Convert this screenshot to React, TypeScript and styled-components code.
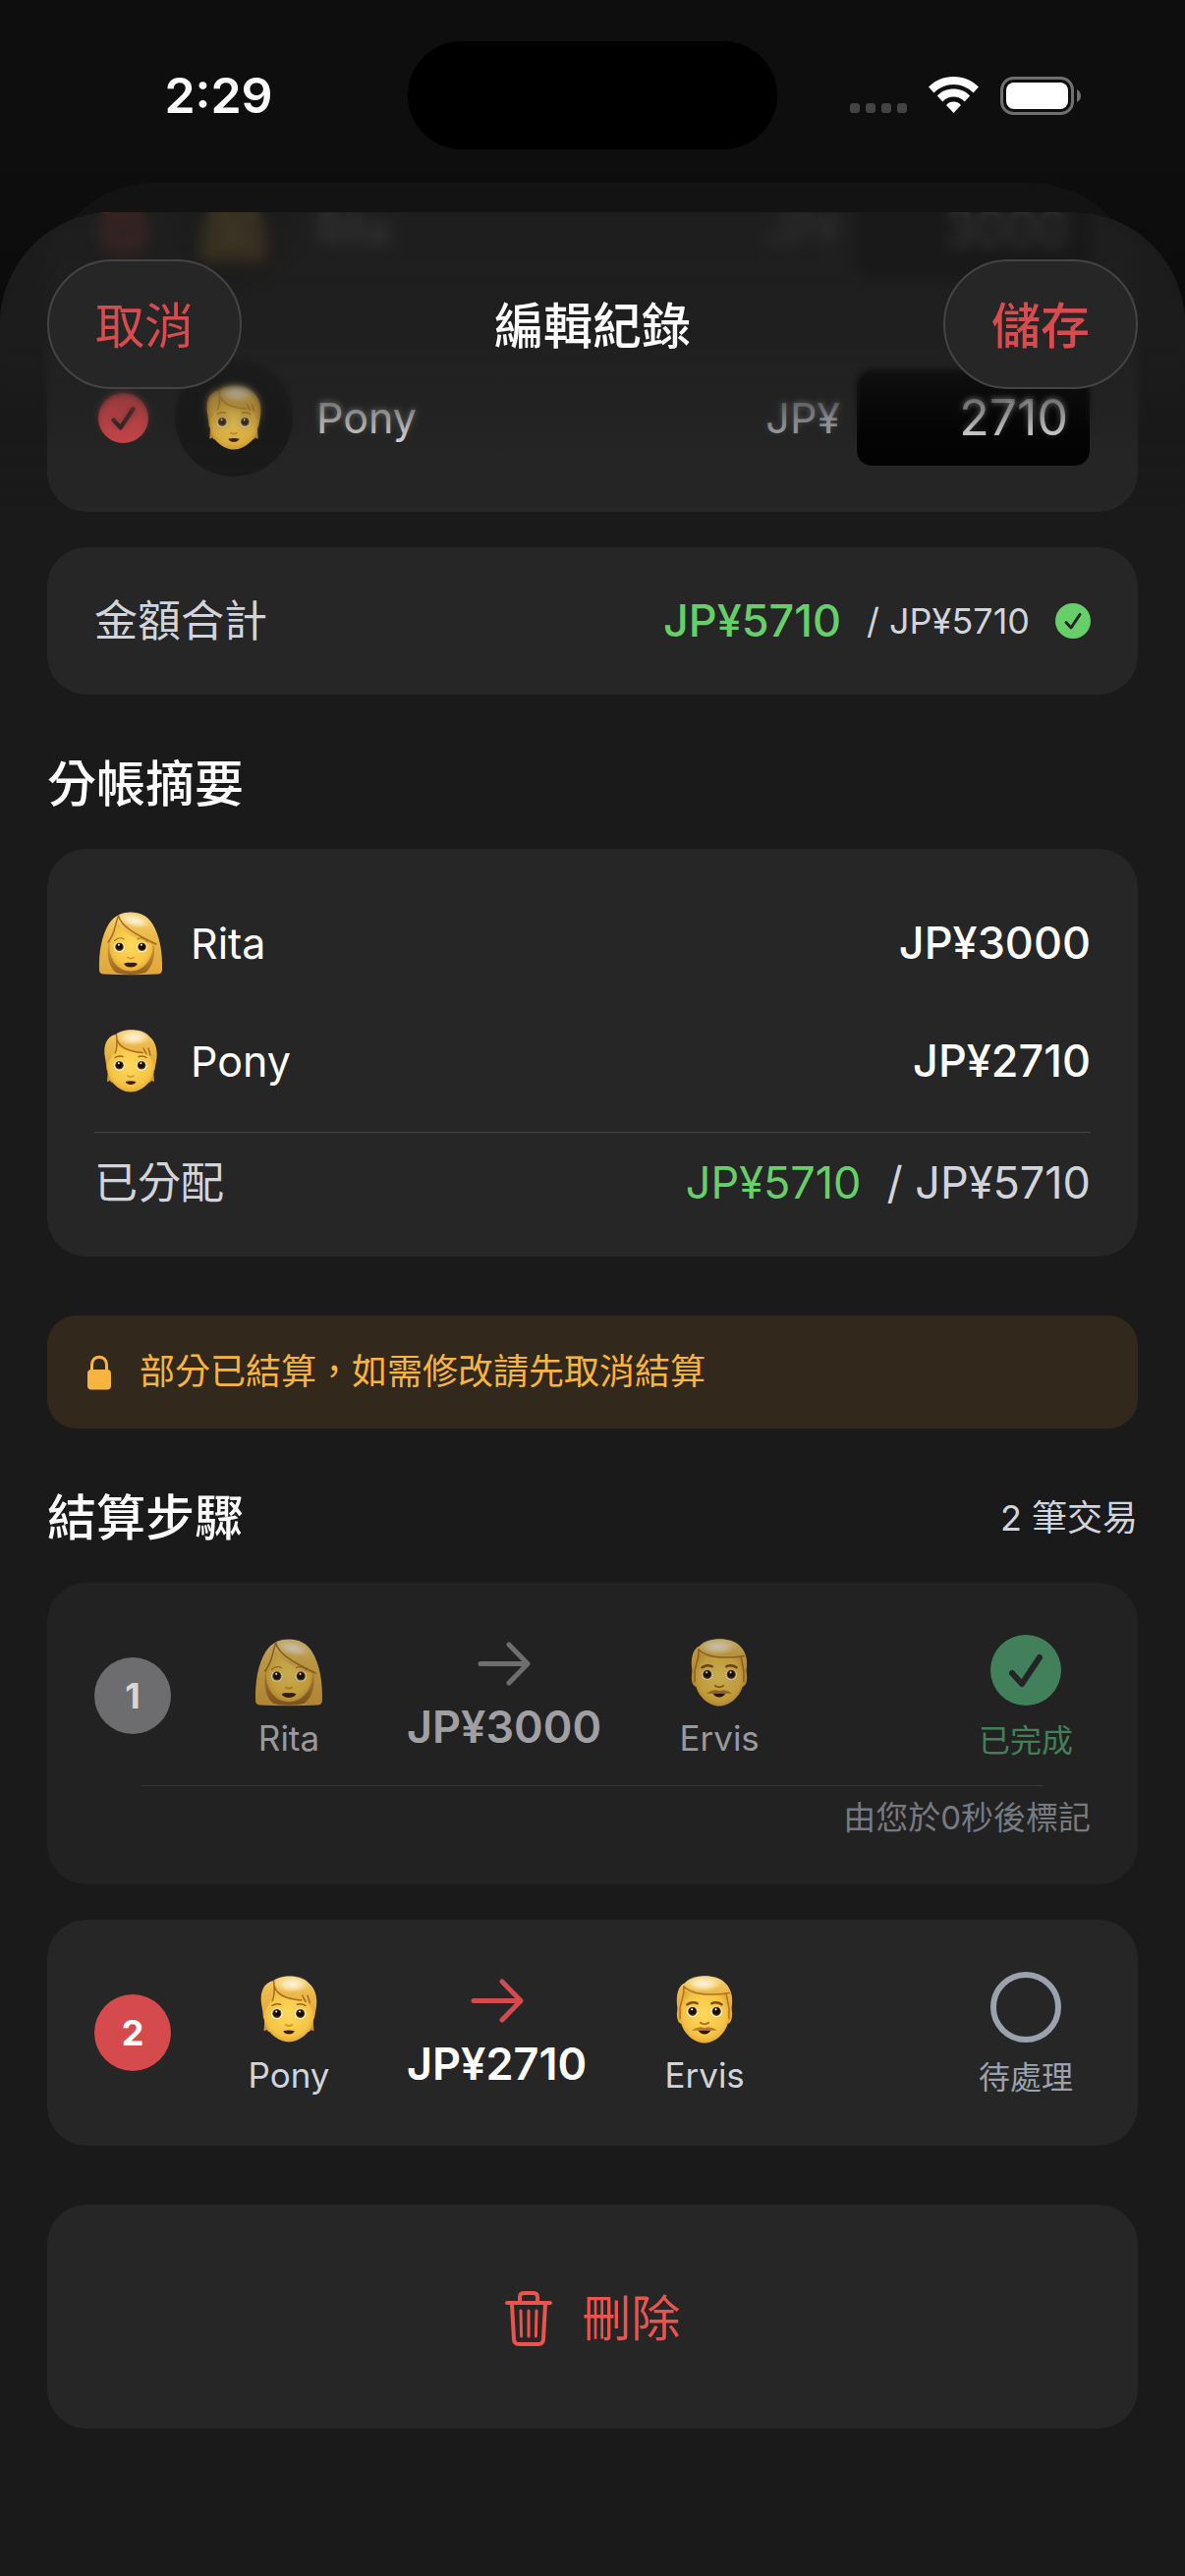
import { useState } from 'react'
import styled, { createGlobalStyle } from 'styled-components'

const GlobalStyle = createGlobalStyle`
    * {
        box-sizing: border-box;
    }
    html, body, #root {
        margin: 0;
        min-height: 100vh;
    }
    body {
        background-color: #0e0e0e;
        color: #ffffff;
        font-family: Inter, "Noto Sans CJK TC", sans-serif;
        font-size: 43px;
        line-height: 54px;
    }
    h1, h2, p, ul, ol {
        margin: 0;
        padding: 0;
        font-size: inherit;
        font-weight: inherit;
    }
    ul, ol {
        list-style: none;
    }
    button, input {
        font: inherit;
        color: inherit;
        border: none;
        background: none;
        padding: 0;
        margin: 0;
    }
    svg {
        display: block;
        flex-shrink: 0;
    }
`

const Screen = styled.div`
    min-height: 100vh;
    display: flex;
    flex-direction: column;
    background: linear-gradient(#0e0e0e, #0e0e0e 160px, #0b0b0b 320px);
`

const StatusBar = styled.div`
    display: grid;
    grid-template-columns: 1fr 376px 1fr;
    align-items: center;
    padding: 42px 0 34px;
`

const Time = styled.time`
    padding-left: 30px;
    text-align: center;
    font-size: 50px;
    font-weight: 600;
`

const Island = styled.div`
    height: 110px;
    border-radius: 55px;
    background-color: #000000;
`

const Signals = styled.div`
    display: flex;
    align-items: center;
    justify-content: center;
    gap: 22px;
    padding-right: 32px;
`

const BackSheet = styled.div`
    height: 180px;
    margin: 0 44px -150px;
    border-radius: 114px 114px 0 0;
    background-color: #131313;
`

const Sheet = styled.main`
    position: relative;
    flex: 1;
    overflow: hidden;
    border-radius: 114px 114px 0 0;
    background-color: #1a1a1a;
`

const Header = styled.header`
    position: absolute;
    top: 0;
    left: 0;
    right: 0;
    display: grid;
    grid-template-columns: 1fr auto 1fr;
    align-items: center;
    padding: 48px;
`

const Title = styled.h1`
    padding-top: 4px;
    font-size: 50px;
    font-weight: 500;
    line-height: 60px;
`

const PillButton = styled.button<{ $strong?: boolean }>`
    justify-self: ${({ $strong }) => ($strong ? 'end' : 'start')};
    height: 132px;
    padding: 4px 47px 0;
    border: 2px solid #444444;
    border-radius: 66px;
    background-color: #262626;
    color: #d84b4f;
    font-size: 50px;
    font-weight: ${({ $strong }) => ($strong ? 500 : 400)};
`

const Veil = styled.div<{ $blur: number; $from: number; $to: number }>`
    position: absolute;
    top: 0;
    left: 0;
    right: 0;
    height: ${({ $to }) => $to}px;
    pointer-events: none;
    backdrop-filter: blur(${({ $blur }) => $blur}px);
    mask-image: linear-gradient(#000 ${({ $from }) => $from}px, transparent);
`

const Tint = styled.div`
    position: absolute;
    top: 0;
    left: 0;
    right: 0;
    height: 300px;
    pointer-events: none;
    background: linear-gradient(
        rgba(29, 29, 29, 0.87),
        rgba(29, 29, 29, 0.84) 60px,
        rgba(29, 29, 29, 0.7) 130px,
        rgba(29, 29, 29, 0.34) 190px,
        rgba(29, 29, 29, 0.14) 225px,
        rgba(29, 29, 29, 0)
    );
`

const Content = styled.div`
    display: flex;
    flex-direction: column;
    gap: 60px;
    margin-top: -79px;
    padding: 0 48px 150px;
`

const Section = styled.section`
    display: flex;
    flex-direction: column;
    gap: 36px;
`

const Card = styled.div<{ $done?: boolean }>`
    padding: 48px;
    border-radius: 40px;
    background-color: ${({ $done }) => ($done ? '#222222' : '#262626')};
`

const MemberList = styled.ul`
    display: flex;
    flex-direction: column;
    gap: 72px;
    padding: 36px 48px;
    border-radius: 40px;
    background-color: #262626;
`

const MemberRow = styled.li`
    display: flex;
    align-items: center;
    gap: 24px;
`

const CheckSlot = styled.span`
    display: grid;
    place-items: center;
    width: 58px;
    > * {
        grid-area: 1 / 1;
    }
    svg {
        pointer-events: none;
    }
`

const CheckBox = styled.input`
    appearance: none;
    width: 51px;
    height: 51px;
    border: 5px solid #d84b4f;
    border-radius: 50%;
    &:checked {
        background-color: #d84b4f;
    }
`

const Avatar = styled.span`
    display: grid;
    place-items: center;
    width: 120px;
    height: 120px;
    border-radius: 50%;
    background-color: #1a1a1a;
`

const MemberName = styled.label`
    flex: 1;
    color: #e8e8e8;
`

const AmountField = styled.label`
    display: flex;
    align-items: center;
    gap: 16px;
    color: #b8bac2;
`

const AmountInput = styled.input`
    width: 239px;
    height: 100px;
    padding: 0 22px;
    border: 1px solid #2b2b2b;
    border-radius: 16px;
    background-color: #000000;
    color: #f2f2f2;
    font-size: 50px;
    text-align: right;
`

const Line = styled.div`
    display: flex;
    align-items: center;
    justify-content: space-between;
`

const Label = styled.span`
    color: #d1d4db;
    font-size: 44px;
`

const Totals = styled.div`
    display: flex;
    align-items: center;
    gap: 26px;
    font-size: 45px;
`

const Allocated = styled.span<{ $medium?: boolean }>`
    color: #67cf69;
    font-weight: ${({ $medium }) => ($medium ? 500 : 400)};
`

const Muted = styled.span<{ $small?: boolean }>`
    color: #d1d4db;
    font-size: ${({ $small }) => ($small ? '36px' : '45px')};
`

const Heading = styled.h2`
    padding-top: 2px;
    font-size: 50px;
    font-weight: 500;
    line-height: 59px;
`

const SummaryCard = styled(Card)`
    padding: 36px 48px 48px;
`

const SummaryRow = styled.li`
    display: flex;
    align-items: center;
    gap: 24px;
    height: 120px;
`

const SummaryFace = styled.span`
    display: grid;
    place-items: center;
    width: 74px;
`

const SummaryName = styled.span`
    flex: 1;
`

const Strong = styled.span`
    font-size: 45px;
    font-weight: 500;
`

const Divider = styled.hr<{ $inset?: boolean }>`
    height: 1px;
    border: none;
    margin: ${({ $inset }) => ($inset ? '24px 48px 12px' : '12px 0 24px')};
    background-color: ${({ $inset }) => ($inset ? '#363636' : '#454545')};
`

const Notice = styled.p`
    display: flex;
    align-items: center;
    gap: 24px;
    padding: 36px;
    border-radius: 30px;
    background-color: #32291c;
    color: #f7b43e;
    font-size: 36px;
    line-height: 43px;
`

const StepRow = styled.div`
    display: flex;
    align-items: center;
    gap: 36px;
    min-height: 134px;
`

const StepNumber = styled.span<{ $done: boolean }>`
    display: grid;
    place-items: center;
    width: 78px;
    height: 78px;
    border-radius: 50%;
    background-color: ${({ $done }) => ($done ? '#6d6d6f' : '#d54a4d')};
    color: ${({ $done }) => ($done ? '#d6d6d6' : '#ffffff')};
    font-size: 36px;
    font-weight: 700;
`

const Person = styled.div<{ $done: boolean }>`
    display: flex;
    flex-direction: column;
    align-items: center;
    gap: 6px;
    width: 168px;
    color: ${({ $done }) => ($done ? '#98999e' : '#d1d4db')};
    font-size: 35px;
    line-height: 43px;
    svg {
        margin: 5px 0;
        opacity: ${({ $done }) => ($done ? 0.75 : 1)};
    }
`

const Transfer = styled.div<{ $done: boolean }>`
    display: flex;
    flex-direction: column;
    align-items: center;
    gap: 15px;
    padding-top: 4px;
    color: ${({ $done }) => ($done ? '#9f9fa4' : '#ffffff')};
    font-size: 45px;
    font-weight: 600;
    svg {
        color: ${({ $done }) => ($done ? '#6e6e71' : '#d54a4d')};
    }
`

const StatusButton = styled.button<{ $done: boolean }>`
    display: flex;
    flex-direction: column;
    align-items: center;
    gap: 16px;
    width: 132px;
    margin-left: auto;
    padding-top: 4px;
    color: ${({ $done }) => ($done ? '#42805b' : '#9ca1ae')};
    font-size: 32px;
    line-height: 40px;
`

const StepNote = styled.p`
    color: #787a82;
    font-size: 33px;
    line-height: 40px;
    text-align: right;
`

const DeleteButton = styled.button`
    display: flex;
    align-items: center;
    justify-content: center;
    gap: 31px;
    padding: 86px 48px 82px;
    border-radius: 40px;
    background-color: #262626;
    color: #eb534d;
    font-size: 50px;
    line-height: 60px;
`

const EmojiDefs = styled.svg`
    position: absolute;
    width: 0;
    height: 0;
`

type FaceKind = 'woman' | 'person' | 'man'

const FaceGradients = () => (
    <EmojiDefs aria-hidden="true">
        <defs>
            <radialGradient id="skin" cx="50%" cy="45%" r="62%">
                <stop offset="0" stopColor="#ffd95c" />
                <stop offset="0.7" stopColor="#f5c445" />
                <stop offset="1" stopColor="#d99a2b" />
            </radialGradient>
            <linearGradient id="hair" x1="0" y1="0" x2="0" y2="1">
                <stop offset="0" stopColor="#f6d47c" />
                <stop offset="0.35" stopColor="#ecbb4c" />
                <stop offset="1" stopColor="#e0a63c" />
            </linearGradient>
            <radialGradient id="shine" cx="50%" cy="50%" r="50%">
                <stop offset="0" stopColor="#fff6e0" stopOpacity="0.95" />
                <stop offset="0.5" stopColor="#fdecc4" stopOpacity="0.75" />
                <stop offset="1" stopColor="#fbe3a4" stopOpacity="0" />
            </radialGradient>
            <linearGradient id="hairShade" x1="0" y1="0" x2="0" y2="1">
                <stop offset="0" stopColor="#d9a03a" />
                <stop offset="1" stopColor="#99601c" />
            </linearGradient>
        </defs>
    </EmojiDefs>
)

const Eye = ({ x, y }: { x: number; y: number }) => (
    <g>
        <ellipse cx={x} cy={y} rx="5.6" ry="5.2" fill="#fff3cc" />
        <circle cx={x} cy={y - 0.3} r="4.3" fill="#6b3c12" />
        <circle cx={x} cy={y - 0.5} r="3.3" fill="#150b04" />
        <circle cx={x - 0.6} cy={y - 2.2} r="1" fill="#ffffff" />
    </g>
)

const Face = ({ kind, size }: { kind: FaceKind; size: number }) => (
    <svg width={size} height={size} viewBox="0 0 66 66" aria-hidden="true">
        {kind === 'woman' && (
            <g>
                <path d="M5 64.5Q1 64 1 60C.6 43 3 26 11 13C17 4 25 1.5 33 1.5C42 1.5 50 5 55 13C63 26 65.4 43 65 60Q65 64 61 64.5Q33 66 5 64.5Z" fill="url(#hair)" />
                <path d="M11 31C8 44 10 56 18 63C26 65.500 40 65.500 48 63C56 56 59 44 56 31Z" fill="url(#hairShade)" />
                <path d="M11.500 33C16 29 20 21 20 13C27 24 42 30 55.500 34C56.500 48 47 61.500 33 61.500C19 61.500 10 48 11.500 33Z" fill="url(#skin)" />
                <ellipse cx="37" cy="10" rx="17" ry="7" fill="url(#shine)" transform="rotate(14 37 10)" />
                <path d="M20.5 5C17 13 18 22 10 32M20.5 5C23 17 44 27 59 34" fill="none" stroke="#a86a1c" strokeWidth="1.4" strokeLinecap="round" />
                <path d="M16.500 30.500Q21 26 26 29M40 29Q45 26 49.500 30.500" fill="none" stroke="#a86f20" strokeWidth="1.1" strokeLinecap="round" />
                <Eye x={21.5} y={37} />
                <Eye x={44.5} y={37} />
                <path d="M30 47.500Q33 50 36 47.500" fill="none" stroke="#d18f2a" strokeWidth="1.6" strokeLinecap="round" />
                <path d="M26 54Q29.500 52.200 33 53Q36.500 52.200 40 54Q38 57.600 33 57.600Q28 57.600 26 54Z" fill="#3b1d0c" />
            </g>
        )}
        {kind === 'person' && (
            <g>
                <path d="M10 40L9 54L12 53L13.500 55L17 52V40ZM56 40L57 54L54 53L52.500 55L49 52V40Z" fill="#d29632" />
                <path d="M6.500 27C5 14 11 7 18 6C24 0 44 -1 52 8C60 14 60.500 26 59 33L57.500 42H8.500L8 36Z" fill="url(#hair)" />
                <path d="M9 36C13 30 18 22 18.500 15C24 23 36 25 50 25L57 36C57.500 44 55.500 50 51 55.500C45.500 61.500 39 64.500 33 64.500C27 64.500 20.500 61.500 15 55.500C10.500 50 8.500 44 9 36Z" fill="url(#skin)" />
                <ellipse cx="36" cy="9" rx="17" ry="8.500" fill="url(#shine)" />
                <path d="M18.500 6C18 17 28 23 45 24.500M18.500 6C19 13 20 20 17 25M46 20L49 26M51 20L53 27" fill="none" stroke="#a86a1c" strokeWidth="1.4" strokeLinecap="round" />
                <path d="M17 29.500Q21 27 25 28.500M41 28.500Q45 27 49 29.500" fill="none" stroke="#9c6219" strokeWidth="1.4" strokeLinecap="round" />
                <Eye x={21.5} y={37.5} />
                <Eye x={44} y={37.5} />
                <path d="M30 48Q33 50.500 36 48" fill="none" stroke="#d18f2a" strokeWidth="1.6" strokeLinecap="round" />
                <path d="M27.500 54Q33 52.600 38.500 54Q37 57 33 57Q29 57 27.500 54Z" fill="#3b1d0c" />
            </g>
        )}
        {kind === 'man' && (
            <g>
                <path d="M7 32Q5 44 10 47H13V32ZM59 32Q61 44 56 47H53V32Z" fill="#e3ad3a" />
                <path d="M7 32C5 20 8 10 14 8C22 -1 44 -1 52 7C59 13 60.500 22 59 32L57 38H9Z" fill="url(#hair)" />
                <path d="M10 36C10 28 12 24 13 15C22 20 40 21 54 18C55 24 56 29 56 36V44C54 56 43 65.500 33 65.500C23 65.500 12 56 10 44Z" fill="url(#skin)" />
                <ellipse cx="32" cy="8.500" rx="18" ry="8" fill="url(#shine)" />
                <path d="M13 11C20 19 38 20.500 57 17.500M13 11C14 19 10.500 25 9.500 32V42M54 18.500L56.500 32V42" fill="none" stroke="#b0741f" strokeWidth="1.4" strokeLinecap="round" />
                <path d="M16.500 28.500Q21 25.500 26 27.500M40 27.500Q45 25.500 49.500 28.500" fill="none" stroke="#7d4d14" strokeWidth="2.4" strokeLinecap="round" />
                <Eye x={21.5} y={35.5} />
                <Eye x={44.5} y={35.5} />
                <path d="M29 46Q33 49 37 46" fill="none" stroke="#a86a1c" strokeWidth="1.8" strokeLinecap="round" />
                <path d="M20.500 53.500Q27 48.500 33 51Q39 48.500 45.500 53.500Z" fill="#b87a22" />
                <path d="M27 53.500H39Q37 57 33 57Q29 57 27 53.500Z" fill="#2a1408" />
            </g>
        )}
    </svg>
)

const CheckMark = ({ size, disc }: { size: number; disc?: string }) => (
    <svg width={size} height={size} viewBox="0 0 72 72" aria-hidden="true">
        {disc && <circle cx="36" cy="36" r="36" fill={disc} />}
        <path d="M22 39L32 50L50 23" fill="none" stroke="#242424" strokeWidth="6" strokeLinecap="round" strokeLinejoin="round" />
    </svg>
)

const Arrow = () => (
    <svg width="54" height="45" viewBox="0 0 54 45" aria-hidden="true">
        <path d="M3 22.500H50M32 3L51 22.500L32 42" fill="none" stroke="currentColor" strokeWidth="5" strokeLinecap="round" strokeLinejoin="round" />
    </svg>
)

const Ring = () => (
    <svg width="72" height="72" viewBox="0 0 72 72" aria-hidden="true">
        <circle cx="36" cy="36" r="33" fill="none" stroke="currentColor" strokeWidth="6" />
    </svg>
)

const Lock = () => (
    <svg width="34" height="36" viewBox="0 0 34 36" aria-hidden="true">
        <rect x="5" y="15" width="24" height="20.500" rx="4" fill="currentColor" />
        <path d="M9.500 17V10C9.500 -.5 24.500 -.5 24.500 10V17" fill="none" stroke="currentColor" strokeWidth="3" />
    </svg>
)

const Trash = () => (
    <svg width="48" height="56" viewBox="0 0 48 56" fill="none" stroke="currentColor" strokeLinecap="round" strokeLinejoin="round" aria-hidden="true">
        <path d="M2 12H46" strokeWidth="4" />
        <path d="M15 11V6Q15 2 19 2H29Q33 2 33 6V11" strokeWidth="4" />
        <path d="M7 13L9 49Q9.300 54 14 54H34Q38.700 54 39 49L41 13" strokeWidth="4" />
        <path d="M16 20L16.600 46M24 20V46M32 20L31.400 46" strokeWidth="3" />
    </svg>
)

const StatusIcons = () => (
    <Signals>
        <svg width="58" height="38" viewBox="0 0 58 38" fill="#434343" aria-hidden="true">
            {[0, 16, 32, 48].map((x) => (
                <rect key={x} x={x} y="27" width="10" height="10" rx="3" />
            ))}
        </svg>
        <svg width="51" height="38" viewBox="0 0 51 38" fill="#ffffff" aria-hidden="true">
            <path d="M25.500 0C35.500 0 44.500 4 51 10.500L45.500 16.500C40 11 33 8 25.500 8S11 11 5.500 16.500L0 10.500C6.500 4 15.500 0 25.500 0Z" />
            <path d="M25.500 12.500C32 12.500 38 15 42.200 19.500L36.700 25.400C33.700 22.300 29.800 20.500 25.500 20.500S17.300 22.300 14.300 25.400L8.800 19.500C13 15 19 12.500 25.500 12.500Z" />
            <path d="M25.500 25.500C28.400 25.500 31 26.700 33 28.900L25.500 37L18 28.900C20 26.700 22.600 25.500 25.500 25.500Z" />
        </svg>
        <svg width="82" height="39" viewBox="0 0 82 39" aria-hidden="true">
            <rect x="1.500" y="1.500" width="72" height="36" rx="12" fill="none" stroke="#6f6f6f" strokeWidth="3" />
            <rect x="6" y="6" width="63" height="27" rx="8" fill="#ffffff" />
            <path d="M78 13Q82 15 82 19.500T78 26Z" fill="#6f6f6f" />
        </svg>
    </Signals>
)

interface Member {
    name: string;
    face: FaceKind;
    amount: string;
}

const members: Member[] = [
    { name: 'Rita', face: 'woman', amount: '3000' },
    { name: 'Pony', face: 'person', amount: '2710' },
]

interface Step {
    from: Member;
    done: boolean;
    note?: string;
}

const steps: Step[] = [
    { from: members[0], done: true, note: '由您於0秒後標記' },
    { from: members[1], done: false },
]

const MemberItem = ({ name, face, amount }: Member) => {
    const [checked, setChecked] = useState(true);
    const [value, setValue] = useState(amount);
    return (
        <MemberRow>
            <CheckSlot>
                <CheckBox id={`member-${name}`} type="checkbox" checked={checked} onChange={() => setChecked(!checked)} />
                {checked && <CheckMark size={51} />}
            </CheckSlot>
            <Avatar>
                <Face kind={face} size={68} />
            </Avatar>
            <MemberName htmlFor={`member-${name}`}>{name}</MemberName>
            <AmountField>
                JP¥
                <AmountInput inputMode="numeric" value={value} onChange={(e) => setValue(e.target.value)} />
            </AmountField>
        </MemberRow>
    )
}

const StepItem = ({ step, index }: { step: Step; index: number }) => (
    <Card as="li" $done={step.done}>
        <StepRow>
            <StepNumber $done={step.done}>{index + 1}</StepNumber>
            <Person $done={step.done}>
                <Face kind={step.from.face} size={70} />
                {step.from.name}
            </Person>
            <Transfer $done={step.done}>
                <Arrow />
                <span>JP¥{step.from.amount}</span>
            </Transfer>
            <Person $done={step.done}>
                <Face kind="man" size={70} />
                Ervis
            </Person>
            <StatusButton type="button" $done={step.done}>
                {step.done ? <CheckMark size={72} disc="#42805b" /> : <Ring />}
                {step.done ? '已完成' : '待處理'}
            </StatusButton>
        </StepRow>
        {step.note && (
            <>
                <Divider $inset />
                <StepNote>{step.note}</StepNote>
            </>
        )}
    </Card>
)

const App = () => {
    return (
        <Screen lang="zh-Hant">
            <GlobalStyle />
            <FaceGradients />
            <StatusBar>
                <Time>2:29</Time>
                <Island />
                <StatusIcons />
            </StatusBar>
            <BackSheet />
            <Sheet>
                <Content>
                    <Section>
                        <MemberList>
                            {members.map((member) => (
                                <MemberItem key={member.name} {...member} />
                            ))}
                        </MemberList>
                        <Card>
                            <Line>
                                <Label>金額合計</Label>
                                <Totals>
                                    <Allocated $medium>JP¥5710</Allocated>
                                    <Muted $small>/ JP¥5710</Muted>
                                    <CheckMark size={36} disc="#67cf69" />
                                </Totals>
                            </Line>
                        </Card>
                    </Section>

                    <Section>
                        <Heading>分帳摘要</Heading>
                        <SummaryCard>
                            <ul>
                                {members.map(({ name, face, amount }) => (
                                    <SummaryRow key={name}>
                                        <SummaryFace>
                                            <Face kind={face} size={66} />
                                        </SummaryFace>
                                        <SummaryName>{name}</SummaryName>
                                        <Strong>JP¥{amount}</Strong>
                                    </SummaryRow>
                                ))}
                            </ul>
                            <Divider />
                            <Line>
                                <Label>已分配</Label>
                                <Totals>
                                    <Allocated>JP¥5710</Allocated>
                                    <Muted>/ JP¥5710</Muted>
                                </Totals>
                            </Line>
                        </SummaryCard>
                    </Section>

                    <Notice>
                        <Lock />
                        部分已結算，如需修改請先取消結算
                    </Notice>

                    <Section>
                        <Line>
                            <Heading>結算步驟</Heading>
                            <Muted $small>2 筆交易</Muted>
                        </Line>
                        <Section as="ol">
                            {steps.map((step, index) => (
                                <StepItem key={step.from.name} step={step} index={index} />
                            ))}
                        </Section>
                    </Section>

                    <DeleteButton type="button">
                        <Trash />
                        刪除
                    </DeleteButton>
                </Content>

                <Veil $blur={3} $from={170} $to={235} />
                <Veil $blur={7} $from={70} $to={140} />
                <Tint />
                <Header>
                    <PillButton type="button">取消</PillButton>
                    <Title>編輯紀錄</Title>
                    <PillButton type="button" $strong>儲存</PillButton>
                </Header>
            </Sheet>
        </Screen>
    )
}

export default App
